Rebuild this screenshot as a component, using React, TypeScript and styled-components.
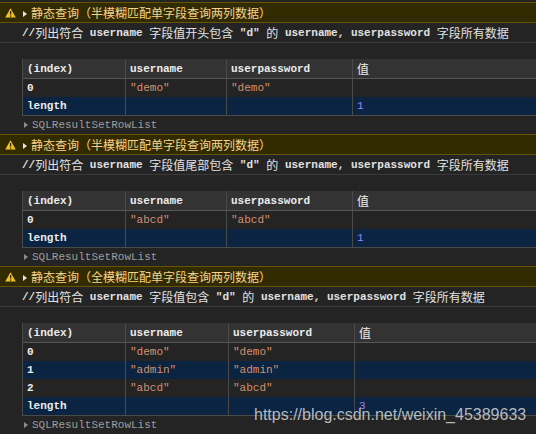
import React from 'react'
import styled,{createGlobalStyle} from 'styled-components'

const MONO='"Liberation Mono", "Noto Sans CJK SC", monospace'
const CJK='"Noto Sans CJK SC", "Liberation Sans", sans-serif'
const GRID='#4a4a4a'

const GlobalStyle=createGlobalStyle`
html,body{margin:0;padding:0;background:#242424;overflow:hidden;}
`

interface IQuery{
    title:string;
    message:string;
    cols:number[];
    rows:string[][];
}

const QUERIES:IQuery[]=[
    {
        title:'静态查询（半模糊匹配单字段查询两列数据）',
        message:'//列出符合 username 字段值开头包含 "d" 的 username, userpassword 字段所有数据',
        cols:[103,101,126],
        rows:[['0','"demo"','"demo"',''],['length','','','1']],
    },
    {
        title:'静态查询（半模糊匹配单字段查询两列数据）',
        message:'//列出符合 username 字段值尾部包含 "d" 的 username, userpassword 字段所有数据',
        cols:[103,101,126],
        rows:[['0','"abcd"','"abcd"',''],['length','','','1']],
    },
    {
        title:'静态查询（全模糊匹配单字段查询两列数据）',
        message:'//列出符合 username 字段值包含 "d" 的 username, userpassword 字段所有数据',
        cols:[103,103,126],
        rows:[['0','"demo"','"demo"',''],['1','"admin"','"admin"',''],['2','"abcd"','"abcd"',''],['length','','','3']],
    },
]

const HEADERS=['(index)','username','userpassword','值']

// splits a string into ascii runs (mono) and cjk runs
const Mixed=({text,bold}:{text:string;bold?:boolean})=>(
    <>
        {text.split(/([\x20-\x7e]+)/).filter(Boolean).map((part,i)=>/^[\x20-\x7e]+$/.test(part)
            ?<Latin key={i} $bold={bold}>{part}</Latin>
            :<Han key={i}>{part}</Han>)}
    </>
)

const QueryBlock=({title,message,cols,rows}:IQuery)=>{
    const template=`${cols[0]}px ${cols[1]}px ${cols[2]}px 1fr`
    return (
        <section>
            <WarnBar>
                <svg width='11' height='10' viewBox='0 0 11 10'>
                    <path d='M5.5 0.3 L10.8 9.6 L0.2 9.6 Z' fill='#f0bf2a' />
                    <rect x='5' y='3' width='1.2' height='3.6' fill='#2a2300' />
                    <rect x='5' y='7.5' width='1.2' height='1.2' fill='#2a2300' />
                </svg>
                <Caret width='4' height='6' viewBox='0 0 4 6'>
                    <path d='M0 0 L4 3 L0 6 Z' fill='#e6e6e6' />
                </Caret>
                <WarnTitle>{title}</WarnTitle>
            </WarnBar>
            <Message><Mixed text={message} bold /></Message>
            <Table>
                <Row $cols={template} $tone='head'>
                    {HEADERS.map(h=><Cell key={h} $kind='key'><Mixed text={h} bold /></Cell>)}
                </Row>
                {rows.map((row,r)=>(
                    <Row key={r} $cols={template} $tone={r%2?'alt':'plain'}>
                        {row.map((v,c)=><Cell key={c} $kind={c===0?'key':v.startsWith('"')?'str':'num'}>{v}</Cell>)}
                    </Row>
                ))}
            </Table>
            <Proto>
                <svg width='4' height='6' viewBox='0 0 4 6'>
                    <path d='M0 0 L4 3 L0 6 Z' fill='#8c8c8c' />
                </svg>
                <ProtoName>SQLResultSetRowList</ProtoName>
            </Proto>
        </section>
    )
}

export default function App(){
    return (
        <Page>
            <GlobalStyle />
            {QUERIES.map((q,i)=><QueryBlock key={i} {...q} />)}
            <Watermark>https://blog.csdn.net/weixin_45389633</Watermark>
        </Page>
    )
}

const Page=styled.div`
position:relative;
height:434px;
padding-top:2px;
box-sizing:border-box;
overflow:hidden;
background:#242424;
`

const WarnBar=styled.div`
display:flex;
align-items:center;
height:19px;
padding-left:5px;
background:#332b00;
border-top:1px solid #665500;
border-bottom:1px solid #665500;
`

const Caret=styled.svg`
margin:3px 0 0 7px;
`

const WarnTitle=styled.span`
margin-left:4px;
font:12px/19px ${CJK};
color:#f6d38c;
white-space:pre;
`

const Message=styled.div`
display:flex;
align-items:center;
height:19px;
padding-left:22px;
border-bottom:1px solid #3a3a3a;
color:#e2e2e2;
white-space:pre;
`

const Latin=styled.span<{$bold?:boolean}>`
font:${({$bold})=>$bold?'bold ':''}11px/18px ${MONO};
white-space:pre;
`

const Han=styled.span`
font:12px/18px ${CJK};
`

const Table=styled.div`
margin:16px 0 0 22px;
border-left:1px solid ${GRID};
border-bottom:1px solid ${GRID};
`

const Row=styled.div<{$cols:string;$tone:'head'|'plain'|'alt'}>`
display:grid;
grid-template-columns:${({$cols})=>$cols};
height:${({$tone})=>$tone==='head'?'19px':'18px'};
background:${({$tone})=>$tone==='head'?'#333333':$tone==='alt'?'#0a2441':'#242424'};
border-bottom:${({$tone})=>$tone==='head'?'1px solid #575757':'none'};
`

const Cell=styled.div<{$kind:'key'|'str'|'num'}>`
box-sizing:border-box;
padding:0 4px;
border-right:1px solid ${GRID};
overflow:hidden;
white-space:pre;
display:flex;
align-items:center;
font:${({$kind})=>$kind==='key'?'bold ':''}11px/18px ${MONO};
color:${({$kind})=>$kind==='key'?'#ececec':$kind==='str'?'#d4916f':'#9a86ff'};
&:last-child{border-right:none;}
`

const Proto=styled.div`
display:flex;
align-items:center;
height:18px;
padding-left:24px;
`

const ProtoName=styled.span`
margin-left:4px;
font:11px/18px ${MONO};
color:#9d9d9d;
`

const Watermark=styled.div`
position:absolute;
left:254px;
top:406px;
font:16px/18px "Liberation Sans", Arial, sans-serif;
color:rgba(208,208,208,0.88);
pointer-events:none;
white-space:nowrap;
`
